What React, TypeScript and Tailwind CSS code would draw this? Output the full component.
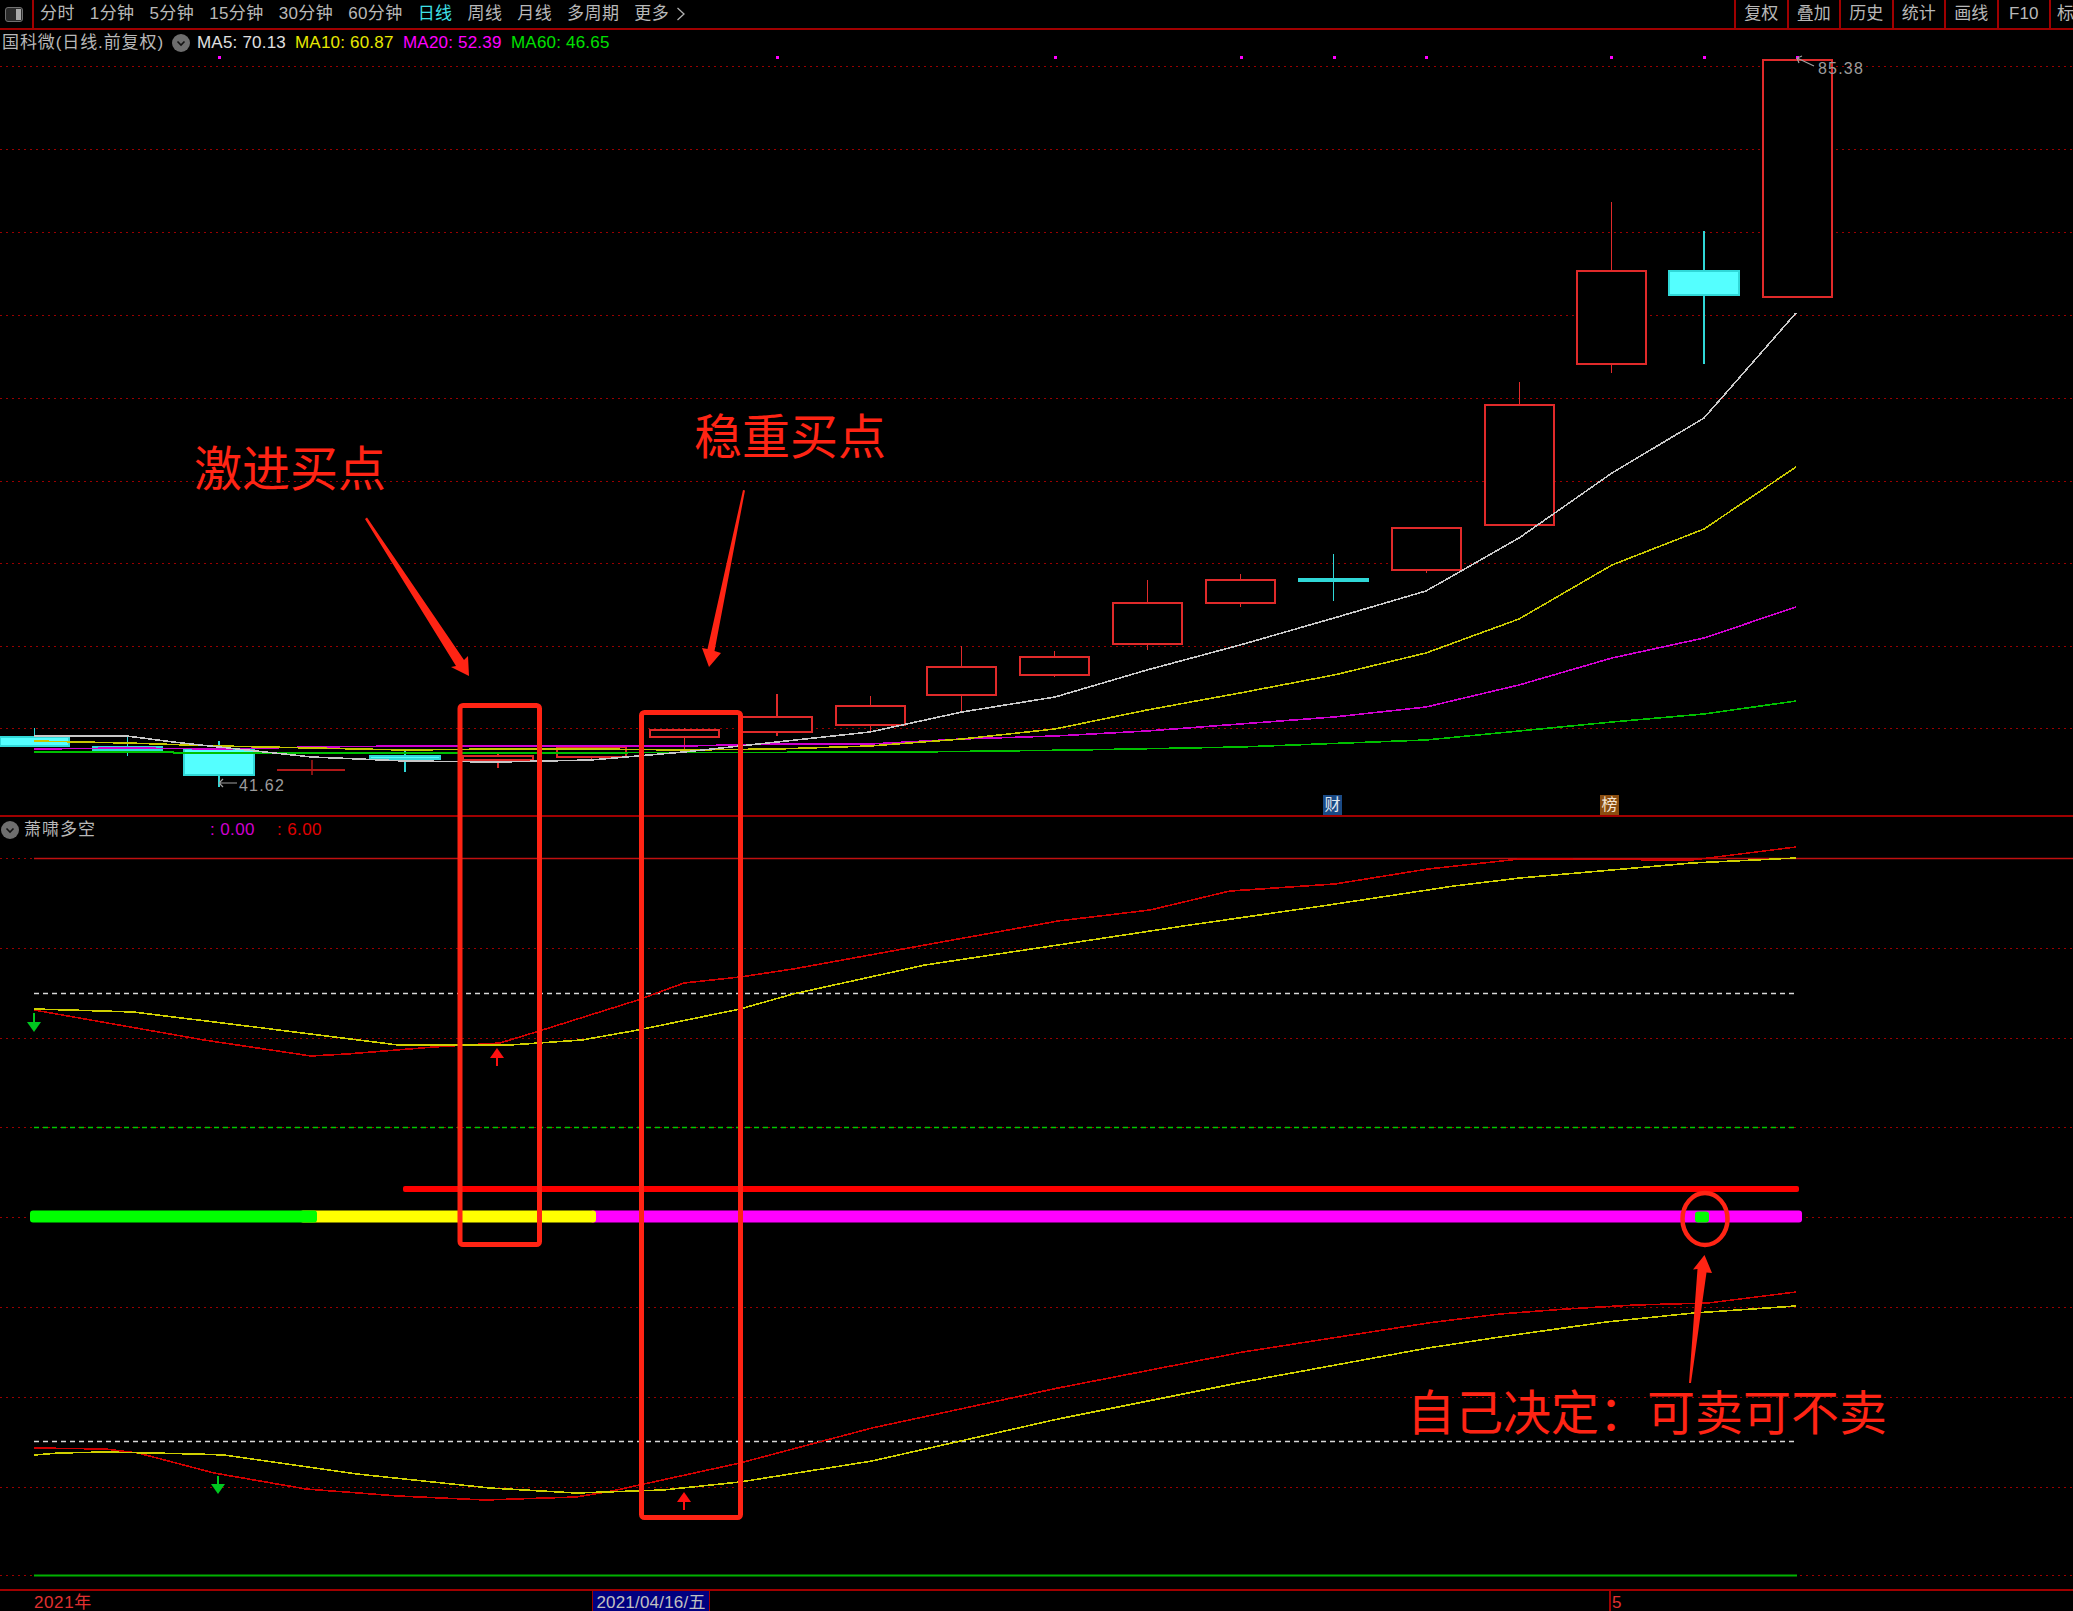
import React from 'react'

const CANDLE_RED = '#e02a2a'
const CYAN = '#54ffff'
const CYAN_WICK = '#30d8d8'
const ANNOTATION = '#ff2414'
const GRID = '#9a0000'

const periods = [
  { label: '分时' },
  { label: '1分钟' },
  { label: '5分钟' },
  { label: '15分钟' },
  { label: '30分钟' },
  { label: '60分钟' },
  { label: '日线', active: true },
  { label: '周线' },
  { label: '月线' },
  { label: '多周期' },
  { label: '更多' },
]

const tools = ['复权', '叠加', '历史', '统计', '画线', 'F10']

// x0, x1, body top, body bottom, wick top, wick bottom
type Candle = [number, number, number, number, number, number]

const redCandles: Candle[] = [
  [463, 533, 756, 760, 753, 768],
  [557, 626, 747, 757, 747, 761],
  [650, 719, 730, 737, 728, 750],
  [742, 812, 717, 732, 694, 736],
  [836, 905, 706, 725, 696, 732],
  [927, 996, 667, 695, 646, 711],
  [1020, 1089, 657, 675, 651, 677],
  [1113, 1182, 603, 644, 580, 650],
  [1206, 1275, 580, 603, 574, 607],
  [1392, 1461, 528, 570, 528, 573],
  [1485, 1554, 405, 525, 382, 525],
  [1577, 1646, 271, 364, 202, 373],
  [1763, 1832, 60, 297, 60, 297],
]

const cyanCandles: Candle[] = [
  [0, 69, 737, 746, 728, 746],
  [93, 162, 747, 750, 737, 756],
  [184, 254, 749, 775, 741, 787],
  [370, 440, 756, 759, 750, 772],
  [1299, 1368, 579, 581, 554, 601],
  [1669, 1739, 271, 295, 231, 364],
]

const ma5 = '34,736 127,736 173,742 219,747 265,752 312,757 405,761 498,762 591,760 684,752 777,742 870,732 962,712 1055,697 1147,670 1240,645 1334,618 1426,591 1519,538 1612,473 1704,418 1796,313'
const ma10 = '34,741 127,743 219,746 312,748 405,750 498,749 591,749 684,750 777,749 870,746 962,739 1055,729 1147,710 1240,693 1334,675 1426,653 1519,619 1612,565 1704,529 1796,467'
const ma20 = '34,749 127,748 219,749 312,747 405,746 498,746 591,746 684,746 777,744 870,744 962,739 1055,736 1147,731 1240,724 1334,717 1426,707 1519,685 1612,658 1704,638 1796,607'
const ma60 = '34,752 173,752 174,753 510,753 914,752 1077,750 1240,747 1426,740 1519,731 1612,722 1704,714 1796,701'

const upperRed = '34,1010 102,1022 204,1040 311,1056 347,1054 434,1047 500,1043 536,1032 638,1000 684,983 740,977 793,969 925,945 1058,921 1150,910 1230,891 1335,884 1428,869 1520,859 1692,860 1796,847'
const upperYellow = '34,1009 102,1011 133,1012 255,1027 398,1045 510,1045 582,1040 638,1030 740,1009 793,994 925,965 1058,945 1190,925 1322,906 1454,886 1520,878 1692,863 1796,858'
const lowerRed = '34,1448 105,1449 138,1453 214,1473 306,1489 398,1496 485,1500 576,1497 612,1491 740,1463 872,1428 1058,1388 1243,1352 1428,1323 1500,1314 1566,1309 1635,1305 1708,1303 1796,1292'
const lowerYellow = '34,1455 59,1453 105,1452 196,1454 224,1455 357,1474 490,1488 576,1493 663,1490 740,1482 872,1461 1058,1419 1243,1382 1428,1348 1500,1337 1606,1322 1694,1313 1796,1306'

const mainGrid = [66, 149, 232, 315, 398, 481, 563, 646, 728]
const lowerGrid = [948, 1038, 1127, 1217, 1307, 1397, 1487, 1575]
const signalDots = [218, 776, 1054, 1240, 1333, 1425, 1610, 1703, 1796]

function GridLines({ rows }: { rows: number[] }) {
  return (
    <>
      {rows.map((y) => (
        <line key={y} x1={0} x2={2073} y1={y + 0.5} y2={y + 0.5} stroke={GRID} strokeWidth={1} strokeDasharray="2 4" />
      ))}
    </>
  )
}

function CandleShape({ c, stroke, fill }: { c: Candle; stroke: string; fill: string }) {
  const [x0, x1, top, bottom, wickTop, wickBottom] = c
  const mid = (x0 + x1) / 2
  return (
    <g shapeRendering="crispEdges">
      <line x1={mid} x2={mid} y1={wickTop} y2={wickBottom} stroke={stroke === CANDLE_RED ? CANDLE_RED : CYAN_WICK} strokeWidth={1.5} />
      <rect x={x0} y={top} width={x1 - x0} height={bottom - top} fill={fill} stroke={stroke} strokeWidth={1.5} />
    </g>
  )
}

function MarkerArrow({ x, y0, y1, color }: { x: number; y0: number; y1: number; color: string }) {
  // y0 is the tip, y1 the tail
  const dir = y1 > y0 ? 1 : -1
  return (
    <g>
      <line x1={x} x2={x} y1={y0 + dir * 6} y2={y1} stroke={color} strokeWidth={2} />
      <polygon points={`${x},${y0} ${x - 7},${y0 + dir * 10} ${x + 7},${y0 + dir * 10}`} fill={color} />
    </g>
  )
}

function MainChart() {
  return (
    <svg className="absolute left-0 top-0 h-[785px] w-[2073px]" viewBox="0 30 2073 785">
      <GridLines rows={mainGrid} />
      {signalDots.map((x) => (
        <rect key={x} x={x} y={56} width={3} height={3} fill="#ff00ff" />
      ))}
      {redCandles.map((c) => (
        <CandleShape key={c[0]} c={c} stroke={CANDLE_RED} fill="#000000" />
      ))}
      <line x1={277} x2={345} y1={770} y2={770} stroke="#b01818" strokeWidth={2} />
      <line x1={312} x2={312} y1={760} y2={775} stroke="#b01818" strokeWidth={1.5} />
      {cyanCandles.map((c) => (
        <CandleShape key={c[0]} c={c} stroke={CYAN_WICK} fill={CYAN} />
      ))}
      <g fill="none" strokeWidth={1.6} shapeRendering="crispEdges">
        <polyline points={ma60} stroke="#00c000" />
        <polyline points={ma20} stroke="#d000d0" />
        <polyline points={ma10} stroke="#c8c800" />
        <polyline points={ma5} stroke="#c8c8c8" />
      </g>
      <g fill="none" stroke="#a0a0a0" strokeWidth={1.2}>
        <path d="M1797 58 L1814 66 M1797 58 L1802 56 M1797 58 L1799 63" />
        <path d="M219 783 L237 783 M219 783 L223 779 M219 783 L223 787" />
      </g>
    </svg>
  )
}

function LowerChart() {
  return (
    <svg className="absolute left-0 top-0 h-[772px] w-[2073px]" viewBox="0 817 2073 772">
      <GridLines rows={lowerGrid} />
      <line x1={0} x2={34} y1={858.5} y2={858.5} stroke={GRID} strokeDasharray="2 4" />
      <line x1={34} x2={2073} y1={858.5} y2={858.5} stroke="#c01010" strokeWidth={1.5} />
      <line x1={34} x2={1795} y1={993.5} y2={993.5} stroke="#d8d8d8" strokeWidth={1.5} strokeDasharray="5 4" />
      <line x1={34} x2={1795} y1={1127.5} y2={1127.5} stroke="#00c800" strokeWidth={1.5} strokeDasharray="5 4" />
      <line x1={34} x2={1795} y1={1441.5} y2={1441.5} stroke="#d8d8d8" strokeWidth={1.5} strokeDasharray="5 4" />
      <line x1={34} x2={1797} y1={1575.5} y2={1575.5} stroke="#00b000" strokeWidth={2} />
      <g fill="none" strokeWidth={1.6} shapeRendering="crispEdges">
        <polyline points={upperRed} stroke="#d00000" />
        <polyline points={upperYellow} stroke="#d0d000" />
        <polyline points={lowerRed} stroke="#d00000" />
        <polyline points={lowerYellow} stroke="#d0d000" />
      </g>
      <rect x={403} y={1186} width={1396} height={6} rx={2} fill="#ff0000" />
      <rect x={590} y={1210.5} width={1212} height={12} rx={3} fill="#ff00ff" />
      <rect x={300} y={1210.5} width={296} height={12} rx={3} fill="#ffff00" />
      <rect x={30} y={1210.5} width={287} height={12} rx={3} fill="#00ff00" />
      <rect x={1695} y={1211.5} width={14} height={11} rx={3} fill="#00ff00" />
      <MarkerArrow x={34} y0={1032} y1={1013} color="#00c820" />
      <MarkerArrow x={218} y0={1494} y1={1476} color="#00c820" />
      <MarkerArrow x={497} y0={1048} y1={1066} color="#ff1010" />
      <MarkerArrow x={684} y0={1492} y1={1510} color="#ff1010" />
    </svg>
  )
}

function Annotations() {
  return (
    <>
      <svg className="pointer-events-none absolute left-0 top-0 h-[1611px] w-[2073px]" viewBox="0 0 2073 1611">
        <g fill="none" stroke={ANNOTATION} strokeWidth={5}>
          <rect x={460} y={705.5} width={79.5} height={539} rx={3} />
          <rect x={641.5} y={712.5} width={99} height={805} rx={3} />
          <ellipse cx={1705} cy={1219} rx={22.5} ry={26} strokeWidth={4.5} />
        </g>
        <g fill={ANNOTATION}>
          <polygon points="365,519 367,517.5 464,660 468,656 469,676 451,667 456,666" />
          <polygon points="743,490 745,490.5 714.5,651 721,653 709,667 702,648 707.5,649" />
          <polygon points="1689,1383 1691,1383 1706.5,1272.5 1712,1273 1704.5,1255 1693,1269.5 1697.5,1269" />
        </g>
      </svg>
      <div className="pointer-events-none absolute left-[194px] top-[435px] text-[48px] leading-[70px] text-[#ff2414]">激进买点</div>
      <div className="pointer-events-none absolute left-[694px] top-[403px] text-[48px] leading-[70px] text-[#ff2414]">稳重买点</div>
      <div className="pointer-events-none absolute left-[1407px] top-[1379px] text-[48px] leading-[70px] text-[#ff2414]">自己决定：可卖可不卖</div>
    </>
  )
}

function CollapseDot() {
  return (
    <span className="flex h-[18px] w-[18px] shrink-0 items-center justify-center rounded-full bg-[#6e6e6e]">
      <svg width="12" height="12" viewBox="0 0 12 12" fill="none" stroke="#111" strokeWidth="1.6">
        <path d="M2.5 4.5 L6 8 L9.5 4.5" />
      </svg>
    </span>
  )
}

export default function App() {
  return (
    <div
      className="relative flex h-[1611px] w-[2073px] flex-col overflow-hidden bg-black text-[17px] text-[#b8b8b8]"
      style={{ fontFamily: '"Liberation Sans", "Noto Sans CJK SC", sans-serif' }}
    >
      <header className="flex h-[30px] shrink-0 items-stretch border-b-2 border-[#a00000]">
        <div className="flex w-[34px] shrink-0 items-center justify-center border-r-2 border-[#a00000] pr-[4px]">
          <span className="flex h-[15px] w-[18px] justify-end rounded-[3px] border border-[#707070] bg-[#2a2a2a] p-[1px]">
            <span className="h-full w-[5px] bg-[#a8a8a8]" />
          </span>
        </div>
        <nav className="flex items-center gap-[15px] pl-[6px] tracking-[0.4px]">
          {periods.map((p) => (
            <span key={p.label} className={p.active ? 'text-[#3fe0e8]' : ''}>
              {p.label}
            </span>
          ))}
          <svg width="10" height="16" viewBox="0 0 10 16" fill="none" stroke="#b0b0b0" strokeWidth="1.3" className="-ml-[8px]">
            <path d="M1.5 2 L8 8 L1.5 14" />
          </svg>
        </nav>
        <div className="ml-auto flex items-stretch">
          {tools.map((t) => (
            <div key={t} className="flex w-[52.5px] items-center justify-center border-l-2 border-[#a00000]">
              {t}
            </div>
          ))}
          <div className="w-[24px] border-l-2 border-[#a00000] pl-[6px] leading-[28px]">标</div>
        </div>
      </header>

      <section className="relative h-[787px] shrink-0 border-b-2 border-[#a00000]">
        <MainChart />
        <div className="relative flex h-[26px] items-center whitespace-nowrap pl-[2px]">
          <span className="w-[170px] tracking-[0.9px]">国科微(日线.前复权)</span>
          <CollapseDot />
          <span className="ml-[7px] w-[98px] tracking-[0.2px] text-[#e0e0e0]">MA5: 70.13</span>
          <span className="w-[108px] tracking-[0.2px] text-[#e8e800]">MA10: 60.87</span>
          <span className="w-[108px] tracking-[0.2px] text-[#ff00ff]">MA20: 52.39</span>
          <span className="tracking-[0.2px] text-[#00e000]">MA60: 46.65</span>
        </div>
        <span className="absolute left-[1818px] top-[29px] text-[16px] leading-[20px] tracking-[1.2px] text-[#9c9c9c]">85.38</span>
        <span className="absolute left-[239px] top-[746px] text-[16px] leading-[20px] tracking-[1.2px] text-[#9c9c9c]">41.62</span>
        <span className="absolute left-[1323px] top-[765px] flex h-[20px] w-[19px] items-center justify-center bg-[#1a4a85] text-[16px] text-[#e0e8f0]">财</span>
        <span className="absolute left-[1600px] top-[765px] flex h-[20px] w-[19px] items-center justify-center bg-[#8a4d10] text-[16px] text-[#f4e4d0]">榜</span>
      </section>

      <section className="relative h-[774px] shrink-0 border-b-2 border-[#a00000]">
        <LowerChart />
        <div className="relative flex h-[26px] items-center whitespace-nowrap pl-[1px]">
          <CollapseDot />
          <span className="ml-[5px] w-[186px] tracking-[1px]">萧啸多空</span>
          <span className="w-[67px] tracking-[0.4px] text-[#d000d0]">: 0.00</span>
          <span className="tracking-[0.4px] text-[#e00000]">: 6.00</span>
        </div>
      </section>

      <footer className="relative h-[20px] shrink-0 overflow-hidden text-[17px] leading-[24px] tracking-[0.6px] text-[#e03030]">
        <span className="absolute left-[34px] top-0">2021年</span>
        <span className="absolute left-[592px] top-0 h-[20px] w-[118px] border-x border-[#a00000] bg-[#000080] text-center tracking-[0.2px] text-[#c0c0c0]">2021/04/16/五</span>
        <span className="absolute left-[1609px] top-0 h-[20px] border-l-2 border-[#a00000] pl-[1px]">5</span>
      </footer>

      <Annotations />
    </div>
  )
}
